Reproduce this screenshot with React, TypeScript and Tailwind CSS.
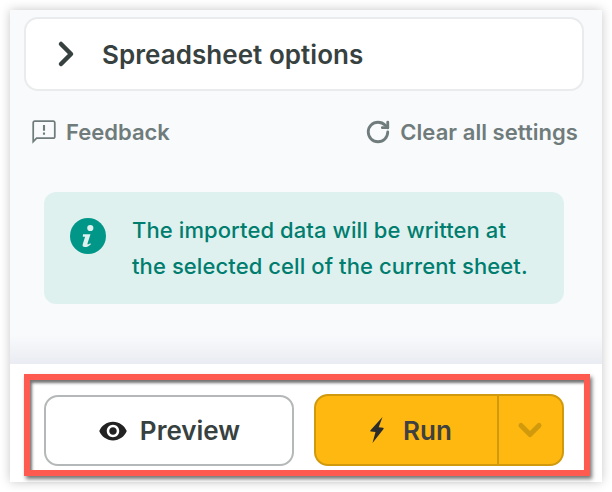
import { ChevronRight, ChevronDown, RotateCw } from "lucide-react";

function FeedbackIcon() {
  return (
    <svg width="28" height="28" viewBox="0 0 24 24" fill="#6f7c7b" className="shrink-0">
      <path d="M20 2H4c-1.1 0-2 .9-2 2v18l4-4h14c1.100 0 2-.9 2-2V4c0-1.100-.9-2-2-2zm0 14.500H5.400L3.500 18.400V4c0-.3.2-.5.5-.5h16c.3 0 .5.2.500.5v12c0 .3-.2.5-.5.500z" />
      <path d="M11.100 6h1.800v5h-1.800zM11.100 12.500h1.800v1.800h-1.800z" />
    </svg>
  );
}

function InfoIcon() {
  return (
    <svg width="36" height="36" viewBox="0 0 36 36" className="shrink-0">
      <circle cx="18" cy="18" r="18" fill="#009688" />
      <circle cx="20.300" cy="10" r="3.100" fill="#def1ef" />
      <path
        d="M13 16.300h7.500l-3 9.200c-.2.8.3 1.100 1 .7l2-1 .4 1c-2 2-4 2.900-6 2.900-2.100 0-2.700-1.200-2.100-3l2.300-7.300h-2.300z"
        fill="#def1ef"
      />
    </svg>
  );
}

function EyeIcon() {
  return (
    <svg width="30" height="30" viewBox="0 0 24 24" fill="#222222" className="shrink-0">
      <path d="M12 4.500C7 4.500 2.730 7.610 1 12c1.730 4.390 6 7.500 11 7.500s9.270-3.110 11-7.500c-1.730-4.390-6-7.500-11-7.500zM12 17c-2.760 0-5-2.240-5-5s2.240-5 5-5 5 2.240 5 5-2.240 5-5 5zm0-8c-1.660 0-3 1.340-3 3s1.340 3 3 3 3-1.340 3-3-1.340-3-3-3z" />
    </svg>
  );
}

function BoltIcon() {
  return (
    <svg width="14" height="26" viewBox="0 0 14 26" fill="#2b2b2b" className="shrink-0">
      <path d="M12.500 0 .5 13.200c-.4.500-.2 1.200.5 1.300l4.500.5L2.500 26 13.500 12c.4-.5.2-1.200-.5-1.300l-4.300-.4z" />
    </svg>
  );
}

export default function App() {
  return (
    <div className="w-[612px] h-[492px] bg-white p-[10px] font-['Inter',sans-serif]">
      <div className="w-[592px] h-[472px] flex flex-col shadow-[0_0_10px_rgba(0,0,0,0.22)] bg-white">
        <div className="h-[354px] shrink-0 bg-gradient-to-b from-[#f9fafc] from-[92%] to-[#e9ecf2] pl-[14px] pt-[7px]">
          <div className="h-[74px] w-[560px] bg-white border-2 border-[#e9ebec] rounded-[14px] flex items-center pl-[20px] gap-[16px]">
            <ChevronRight size={40} strokeWidth={2.7} color="#374240" />
            <span className="text-[26px] font-semibold text-[#374240] tracking-[0.05px]">Spreadsheet options</span>
          </div>
          <div className="flex justify-between items-center h-[28px] mt-[27px] w-[554px] pl-[6px] text-[22px] font-semibold text-[#6f7c7b]">
            <div className="flex items-center gap-[8px]">
              <FeedbackIcon />
              <span>Feedback</span>
            </div>
            <div className="flex items-center gap-[9px]">
              <RotateCw size={26} strokeWidth={2.6} color="#6f7c7b" />
              <span className="tracking-[0.05px]">Clear all settings</span>
            </div>
          </div>
          <div className="mt-[46px] ml-[20px] w-[520px] h-[112px] bg-[#def1ef] rounded-[12px] flex pl-[26px] pt-[20px] gap-[26px]">
            <div className="pt-[6px]">
              <InfoIcon />
            </div>
            <p className="text-[22px] leading-[36px] text-[#007d6e] font-medium tracking-[0.09px]">
              The imported data will be written at
              <br />
              the selected cell of the current sheet.
            </p>
          </div>
        </div>
        <div className="ml-[14px] mt-[10px] w-[566px] h-[102px] border-[6px] border-[#ff5a4f] shadow-[2px_3px_4px_rgba(0,0,0,0.55),inset_2px_3px_3px_rgba(0,0,0,0.55)] flex items-start pl-[14px] pt-[14px] gap-[20px] bg-white">
          <button className="w-[250px] h-[71px] mt-[1px] bg-white border-2 border-[#b5b8b8] rounded-[14px] flex items-center justify-center gap-[12px] text-[26px] font-semibold text-[#374240]">
            <EyeIcon />
            <span>Preview</span>
          </button>
          <div className="w-[250px] h-[72px] bg-[#ffb810] border-2 border-[#d19a0c] rounded-[14px] flex items-center">
            <div className="w-[181px] h-full flex items-center pl-[54px] gap-[19px] text-[26px] font-semibold text-[#3f4140]">
              <BoltIcon />
              <span>Run</span>
            </div>
            <div className="w-[2px] h-full bg-[#d19a0c]" />
            <div className="flex-1 flex items-center justify-center pr-[1px]">
              <ChevronDown size={36} strokeWidth={3.4} color="#d19a0c" />
            </div>
          </div>
        </div>
      </div>
    </div>
  );
}
